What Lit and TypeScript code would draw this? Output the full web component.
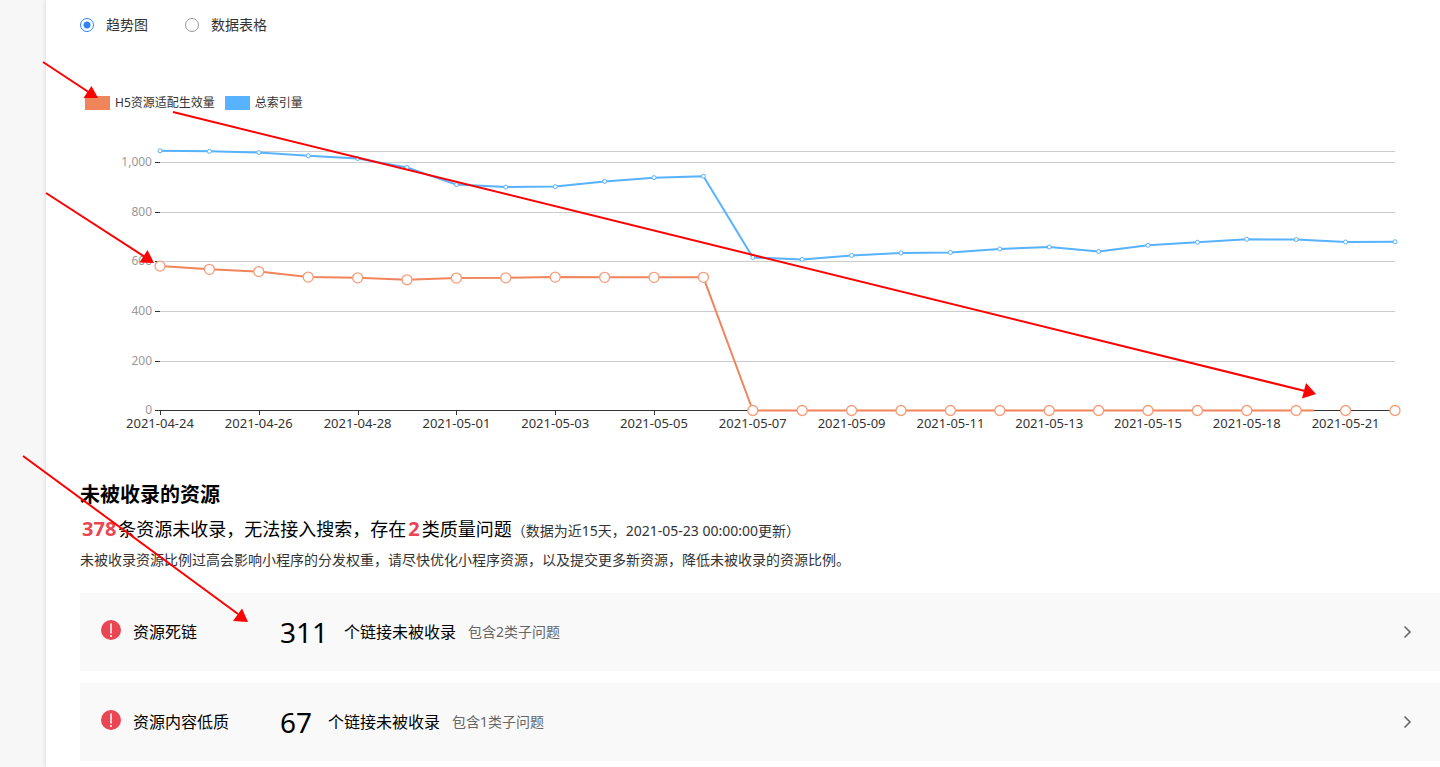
import { LitElement, html, svg, css } from "lit";
import { customElement, property, state } from "lit/decorators.js";

interface Issue {
  name: string;
  count: number;
  kinds: number;
}

const DATES: string[] = [
  "2021-04-24", "2021-04-26", "2021-04-28", "2021-05-01", "2021-05-03",
  "2021-05-05", "2021-05-07", "2021-05-09", "2021-05-11", "2021-05-13",
  "2021-05-15", "2021-05-18", "2021-05-21",
];

const ADAPTED: number[] = [
  581, 568, 559, 537, 534, 526, 533, 534, 537, 536, 536, 536,
  0, 0, 0, 0, 0, 0, 0, 0, 0, 0, 0, 0, 0, 0,
];

const INDEXED: number[] = [
  1045, 1043, 1038, 1025, 1014, 978, 909, 899, 901, 922, 937, 943, 616, 608,
  624, 634, 636, 650, 658, 640, 665, 677, 689, 688, 678, 679,
];

const ISSUES: Issue[] = [
  { name: "资源死链", count: 311, kinds: 2 },
  { name: "资源内容低质", count: 67, kinds: 1 },
];

@customElement("trend-chart")
export class TrendChart extends LitElement {
  static styles = css`
    :host {
      display: block;
    }
    .legend {
      display: flex;
      gap: 10px;
      margin: 0;
      padding: 0 5px;
      list-style: none;
      font-size: 12px;
      line-height: 16px;
      color: #333;
    }
    .legend li {
      display: flex;
      align-items: center;
      gap: 5px;
    }
    .swatch {
      width: 25px;
      height: 14px;
    }
    .adapted {
      background: #f0845b;
    }
    .indexed {
      background: #57b2ff;
    }
    .plot {
      display: block;
      width: 100%;
      height: 330px;
      font-size: 12px;
    }
    .grid {
      stroke: #ccc;
    }
    .axis {
      stroke: #333;
    }
    .value {
      fill: #999;
      text-anchor: end;
    }
    .date {
      fill: #333;
      font-size: 13px;
      text-anchor: middle;
    }
    .line {
      fill: none;
      stroke-width: 2;
      stroke-linejoin: bevel;
    }
    .line-adapted {
      stroke: #f0845b;
    }
    .line-indexed {
      stroke: #57b2ff;
    }
    .dot-adapted {
      fill: #fff;
      stroke: #f79c78;
      stroke-width: 1.3;
    }
    .dot-indexed {
      fill: #fff;
      stroke: #57b2ff;
    }
  `;

  @state() private plotWidth = 1360;

  private observer?: ResizeObserver;

  connectedCallback() {
    super.connectedCallback();
    this.observer = new ResizeObserver((entries) => {
      this.plotWidth = Math.round(entries[0].contentRect.width);
    });
    this.observer.observe(this);
  }

  disconnectedCallback() {
    super.disconnectedCallback();
    this.observer?.disconnect();
  }

  render() {
    const left = 80;
    const right = this.plotWidth - 45;
    const base = 299;
    const step = (right - left) / (ADAPTED.length - 1);
    const x = (i: number) => left + i * step;
    const y = (v: number) => base + 0.5 - v * 0.2485;
    const crisp = (n: number) => Math.floor(n + 0.45) + 0.5;
    const points = (values: number[]) =>
      values.map((v, i) => `${x(i)},${y(v)}`).join(" ");
    const levels = [0, 200, 400, 600, 800, 1000];
    const drawn = x(23) + 18;

    return html`
      <ul class="legend">
        <li><span class="swatch adapted"></span>H5资源适配生效量</li>
        <li><span class="swatch indexed"></span>总索引量</li>
      </ul>
      <svg class="plot" role="img" aria-label="趋势图">
        <defs>
          <clipPath id="drawn">
            <rect x="0" y="0" width=${drawn} height="330"></rect>
          </clipPath>
        </defs>
        ${[...levels.slice(1), 1045].map(
          (v) => svg`<line class="grid" x1=${left} x2=${right}
            y1=${crisp(y(v))} y2=${crisp(y(v))}></line>`
        )}
        ${levels.map(
          (v) => svg`
            <line class="axis" x1=${left - 5} x2=${left}
              y1=${crisp(y(v))} y2=${crisp(y(v))}></line>
            <text class="value" x=${left - 8} y=${Math.floor(y(v) + 0.45) + 4}>${v.toLocaleString("en-US")}</text>`
        )}
        <line class="axis" x1=${left} x2=${right} y1=${base + 0.5} y2=${base + 0.5}></line>
        ${DATES.map(
          (d, i) => svg`
            <line class="axis" x1=${crisp(x(i * 2))} x2=${crisp(x(i * 2))}
              y1=${base} y2=${base + 5}></line>
            <text class="date" x=${x(i * 2)} y=${base + 18}>${d}</text>`
        )}
        <polyline class="line line-indexed" points=${points(INDEXED)}></polyline>
        ${INDEXED.map(
          (v, i) => svg`<circle class="dot-indexed" cx=${x(i)} cy=${y(v)} r="2"></circle>`
        )}
        <polyline class="line line-adapted" clip-path="url(#drawn)" points=${points(ADAPTED)}></polyline>
        ${ADAPTED.map(
          (v, i) => svg`<circle class="dot-adapted" cx=${x(i)} cy=${y(v)} r="5"></circle>`
        )}
      </svg>
    `;
  }
}

@customElement("issue-card")
export class IssueCard extends LitElement {
  static styles = css`
    :host {
      display: block;
    }
    .card {
      display: flex;
      align-items: center;
      width: 100%;
      height: 78px;
      padding: 0 26px 0 20px;
      border: 0;
      background: #f9f9f9;
      font: inherit;
      font-size: 16px;
      line-height: 24px;
      color: #000;
      text-align: left;
      cursor: pointer;
    }
    .alert {
      flex: none;
      width: 22px;
      height: 22px;
      margin: 0 11px 4px 0;
    }
    .name {
      flex: none;
      width: 147px;
    }
    .count {
      margin-right: 16px;
      font-size: 28px;
      line-height: 40px;
    }
    .kinds {
      margin-left: 12px;
      font-size: 14px;
      color: #666;
    }
    .arrow {
      width: 14px;
      height: 14px;
      margin-left: auto;
    }
  `;

  @property({ attribute: false }) issue!: Issue;

  render() {
    return html`
      <button class="card" type="button">
        <svg class="alert" viewBox="0 0 22 22" aria-hidden="true">
          <circle cx="11" cy="11" r="10" fill="#e94552"></circle>
          <path d="M11 5V14" stroke="#fff" stroke-width="1.5" stroke-linecap="round"></path>
          <circle cx="11" cy="17" r="1" fill="#fff"></circle>
        </svg>
        <span class="name">${this.issue.name}</span>
        <span class="count">${this.issue.count}</span>
        <span>个链接未被收录</span>
        <span class="kinds">包含${this.issue.kinds}类子问题</span>
        <svg class="arrow" viewBox="0 0 14 14" aria-hidden="true">
          <path d="M4.5 1.5L10 7L4.5 12.5" fill="none" stroke="#666" stroke-width="1.6"></path>
        </svg>
      </button>
    `;
  }
}

@customElement("app-root")
export class AppRoot extends LitElement {
  static styles = css`
    :host {
      display: block;
      position: relative;
      overflow: hidden;
      font-family: "Noto Sans", "Noto Sans CJK SC", sans-serif;
      color: #333;
    }
    .shell {
      display: grid;
      grid-template-columns: 46px minmax(0, 1fr);
      min-height: 100vh;
      background: #f7f7f7;
    }
    .content {
      padding: 14px 0 6px 34px;
      background: #fff;
      box-shadow: 0 0 5px rgba(0, 0, 0, 0.14);
    }
    .views {
      display: flex;
      gap: 37px;
      margin-bottom: 60px;
      font-size: 14px;
      line-height: 21px;
    }
    .view {
      display: flex;
      align-items: center;
      gap: 12px;
    }
    .radio {
      appearance: none;
      box-sizing: border-box;
      width: 14px;
      height: 14px;
      margin: 0;
      border: 1px solid #999;
      border-radius: 50%;
      background: #fff;
    }
    .radio:checked {
      border-color: #2e82ff;
      background: radial-gradient(circle, #2e82ff 3px, #fff 4px);
    }
    .title {
      margin: 0;
      padding-top: 39px;
      font-size: 20px;
      line-height: 30px;
      color: #000;
    }
    .summary {
      margin: 4px 0 0;
      font-size: 18px;
      line-height: 30px;
      color: #000;
    }
    .number {
      margin: 0 2px;
      font-size: 20px;
      color: #e94552;
    }
    .updated {
      font-size: 14px;
      color: #333;
    }
    .hint {
      margin: 3px 0 22px;
      font-size: 14px;
      line-height: 22px;
    }
    .issues {
      display: grid;
      gap: 12px;
    }
    .marks {
      position: absolute;
      top: 0;
      left: 0;
      width: 1440px;
      height: 767px;
      pointer-events: none;
    }
  `;

  render() {
    return html`
      <div class="shell" lang="zh-CN">
        <aside></aside>
        <main class="content">
          <div class="views" role="radiogroup">
            <label class="view"><input class="radio" type="radio" name="view" checked />趋势图</label>
            <label class="view"><input class="radio" type="radio" name="view" />数据表格</label>
          </div>
          <trend-chart></trend-chart>
          <h2 class="title">未被收录的资源</h2>
          <p class="summary"><strong class="number">378</strong>条资源未收录，无法接入搜索，存在<strong class="number">2</strong>类质量问题<span class="updated">（数据为近15天，2021-05-23 00:00:00更新）</span></p>
          <p class="hint">未被收录资源比例过高会影响小程序的分发权重，请尽快优化小程序资源，以及提交更多新资源，降低未被收录的资源比例。</p>
          <div class="issues">
            ${ISSUES.map((issue) => html`<issue-card .issue=${issue}></issue-card>`)}
          </div>
        </main>
      </div>
      <svg class="marks" viewBox="0 0 1440 767" aria-hidden="true">
        <g stroke="#f00" stroke-width="2">
          <path d="M43 62L90 93"></path>
          <path d="M173 112L1305 391"></path>
          <path d="M46 193L145 257"></path>
          <path d="M23 456L238 614"></path>
        </g>
        <g fill="#f00">
          <path d="M98 98L83.500 98L91.500 86Z"></path>
          <path d="M1316 394L1302 398.500L1306 383Z"></path>
          <path d="M154 263L139.500 262.500L147.500 250Z"></path>
          <path d="M248 622L233 621L242 608.500Z"></path>
        </g>
      </svg>
    `;
  }
}
